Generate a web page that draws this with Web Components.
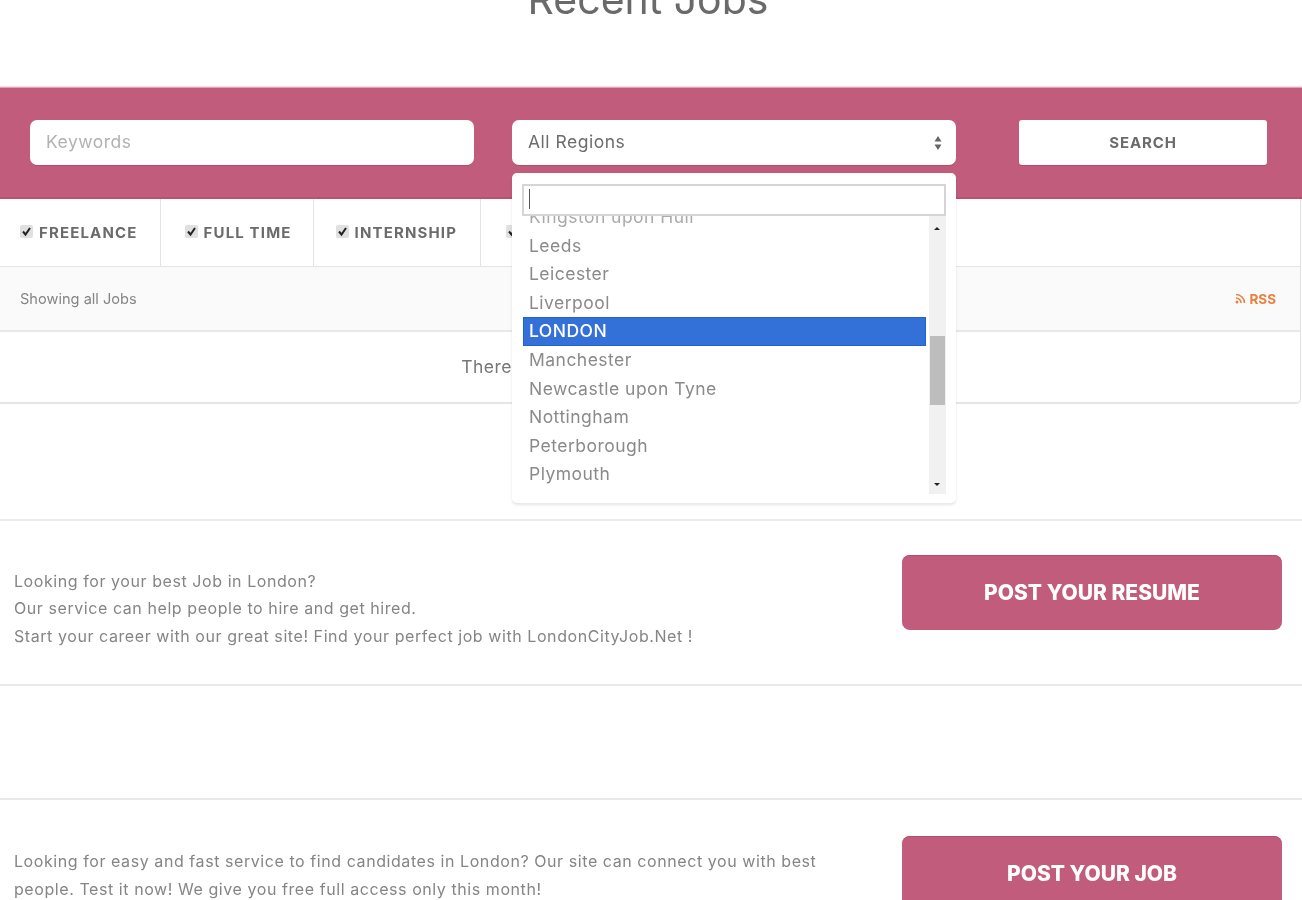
<!DOCTYPE html>
<html lang="en">
<head>
<meta charset="utf-8">
<title>Recent Jobs</title>
<style>
    html, body { margin: 0; height: 900px; overflow: hidden; background: #fff; }
    body { font-family: "Inter", "Liberation Sans", sans-serif; color: #777; filter: blur(.4px); }
</style>
</head>
<body>
<job-heading>Recent Jobs</job-heading>

<job-search>
    <job-filter slot="filters" pad="20 22">FREELANCE</job-filter>
    <job-filter slot="filters" pad="24 21">FULL TIME</job-filter>
    <job-filter slot="filters" pad="22 23">INTERNSHIP</job-filter>
    <job-filter slot="filters" pad="25 24">PART TIME</job-filter>
</job-search>

<div style="height:115px"></div>
<promo-row style="--row-height:167px; --row-pad:34px; --copy-top:12.5px">
    Looking for your best Job in London?<br>
    Our service can help people to hire and get hired.<br>
    Start your career with our great site! Find your perfect job with LondonCityJob.Net !
    <span slot="action">POST YOUR RESUME</span>
</promo-row>
<div style="height:112px"></div>
<promo-row style="--row-height:164px; --row-pad:36px; --copy-top:12px">
    Looking for easy and fast service to find candidates in London? Our site can connect you with best<br>
    people. Test it now! We give you free full access only this month!
    <span slot="action">POST YOUR JOB</span>
</promo-row>

<script>
const FONT = '"Inter", "Liberation Sans", sans-serif';

class JobHeading extends HTMLElement {
    constructor() {
        super();
        this.attachShadow({ mode: 'open' });
        this.shadowRoot.innerHTML = `
            <style>
                :host { display: block; height: 85px; overflow: hidden; }
                h2 {
                    margin: -31px 0 0;
                    text-align: center;
                    font: 400 41px/60px ${FONT};
                    color: #6a6a6a;
                    transform: translateX(-3px);
                }
            </style>
            <h2><slot></slot></h2>
        `;
    }
}

class JobFilter extends HTMLElement {
    constructor() {
        super();
        this.attachShadow({ mode: 'open' });
        const [left, right] = (this.getAttribute('pad') || '20 20').split(' ');
        this.shadowRoot.innerHTML = `
            <style>
                :host {
                    display: flex;
                    align-items: center;
                    gap: 6px;
                    height: 67px;
                    padding: 0 ${right}px 0 ${left}px;
                    border-right: 1px solid #e4e4e4;
                    font: 700 15px ${FONT};
                    letter-spacing: 1.15px;
                    color: #6b6b6b;
                }
                .box {
                    width: 13px;
                    height: 13px;
                    border-radius: 2px;
                    background: #e0e0e0;
                    margin-top: -3px;
                }
                svg { display: block; }
            </style>
            <span class="box">
                <svg width="13" height="13" viewBox="0 0 13 13"><path d="M3 6.5 5.5 9.5 10 3" fill="none" stroke="#222" stroke-width="2"/></svg>
            </span>
            <span><slot></slot></span>
        `;
    }
}

class RegionDropdown extends HTMLElement {
    constructor() {
        super();
        this.attachShadow({ mode: 'open' });
        const regions = ['Kingston upon Hull', 'Leeds', 'Leicester', 'Liverpool', 'LONDON', 'Manchester',
            'Newcastle upon Tyne', 'Nottingham', 'Peterborough', 'Plymouth'];
        this.shadowRoot.innerHTML = `
            <style>
                :host {
                    position: absolute;
                    left: 512px;
                    top: 88px;
                    z-index: 5;
                    width: 444px;
                    height: 330px;
                    box-sizing: border-box;
                    padding: 11px 10px 0;
                    background: #fff;
                    border-radius: 5px;
                    box-shadow: 0 2px 3px rgba(0,0,0,.1);
                    font: 400 17.5px ${FONT};
                    letter-spacing: .47px;
                }
                .search {
                    height: 32px;
                    box-sizing: border-box;
                    border: 2px solid #d5d5d5;
                    padding: 3px 5px;
                }
                .caret { display: block; width: 1px; height: 20px; background: #555; }
                .results { display: flex; height: 278px; }
                ul {
                    flex: 1;
                    margin: 0;
                    padding: 0;
                    list-style: none;
                    overflow: hidden;
                    min-width: 0;
                }
                li {
                    height: 28.6px;
                    line-height: 28.6px;
                    padding-left: 6px;
                    margin: 0 3px 0 1px;
                    color: #8a8a8a;
                }
                li:first-child { margin-top: -13px; color: #aaa; }
                li.on { background: #3370d8; color: #fff; font-weight: 500; outline: 1px solid #1f62d6; outline-offset: -1px; }
                .bar {
                    position: relative;
                    width: 17px;
                    background: #f1f1f1;
                }
                .thumb {
                    position: absolute;
                    left: 1px;
                    right: 1px;
                    top: 120px;
                    height: 69px;
                    background: #bdbdbd;
                }
                .arrow {
                    position: absolute;
                    left: 5px;
                    width: 0;
                    height: 0;
                    border: 3.5px solid transparent;
                }
                .up { top: 8px; border-bottom-color: #222; }
                .down { bottom: 5px; border-top-color: #222; }
            </style>
            <div class="search"><span class="caret"></span></div>
            <div class="results">
                <ul>${regions.map(r => `<li class="${r === 'LONDON' ? 'on' : ''}">${r}</li>`).join('')}</ul>
                <div class="bar">
                    <span class="arrow up"></span>
                    <span class="thumb"></span>
                    <span class="arrow down"></span>
                </div>
            </div>
        `;
    }
}

class JobSearch extends HTMLElement {
    constructor() {
        super();
        this.attachShadow({ mode: 'open' });
        this.shadowRoot.innerHTML = `
            <style>
                :host {
                    display: block;
                    position: relative;
                    height: 319px;
                    box-sizing: border-box;
                    padding-top: 2px;
                    margin-right: 1px;
                    border-right: 1px solid #e2e2e2;
                    border-bottom: 2px solid #e6e6e6;
                    border-radius: 0 0 5px 0;
                }
                .band {
                    display: flex;
                    align-items: flex-start;
                    height: 112px;
                    box-sizing: border-box;
                    margin-right: -2px;
                    padding: 32px 35px 0 30px;
                    background: #c25c7c;
                    border-top: 1px solid #dba6b8;
                    border-bottom: 2px solid #ba5073;
                    box-shadow: 0 -1px 1px #f3e0e6;
                }
                .field {
                    width: 444px;
                    height: 45px;
                    box-sizing: border-box;
                    display: flex;
                    align-items: center;
                    justify-content: space-between;
                    padding: 0 16px 2px;
                    background: #fff;
                    border-radius: 7px;
                    box-shadow: 0 1px 0 #b44a6c;
                    font: 400 17.5px ${FONT};
                    letter-spacing: .5px;
                    color: #b2b2b2;
                }
                .region { margin-left: 38px; color: #6d6d6d; padding-right: 14px; }
                .updown { display: block; margin-top: 2px; }
                .go {
                    margin-left: 63px;
                    width: 248px;
                    height: 45px;
                    display: flex;
                    align-items: center;
                    justify-content: center;
                    background: #fff;
                    border-radius: 3px;
                    box-shadow: 0 1px 0 #b44a6c;
                    font: 700 15px ${FONT};
                    letter-spacing: .85px;
                    color: #6b6b6b;
                }
                .filters { display: flex; height: 67px; border-bottom: 1px solid #e4e4e4; }
                .status {
                    display: flex;
                    align-items: center;
                    justify-content: space-between;
                    height: 63px;
                    padding: 0 24px 0 20px;
                    background: #fafafa;
                    border-bottom: 2px solid #e8e8e8;
                    font: 400 14.6px ${FONT};
                    color: #858585;
                }
                .rss {
                    display: flex;
                    align-items: center;
                    gap: 3px;
                    color: #e8813f;
                    font: 700 13.5px ${FONT};
                }
                .empty {
                    display: block;
                    padding-top: 24px;
                    text-align: center;
                    font: 400 17.5px ${FONT};
                    letter-spacing: .47px;
                    color: #777;
                }
            </style>
            <div class="band">
                <div class="field">Keywords</div>
                <div class="field region">All Regions
                    <svg class="updown" width="8" height="18" viewBox="0 0 8 18"><path d="M4 2 7.5 7.5H.5ZM4 16 .5 10.5H7.5Z" fill="#666"/></svg>
                </div>
                <div class="go">SEARCH</div>
            </div>
            <region-dropdown></region-dropdown>
            <div class="filters"><slot name="filters"></slot></div>
            <div class="status">
                <span>Showing all Jobs</span>
                <span class="rss">
                    <svg width="11" height="11" viewBox="0 0 11 11"><circle cx="2" cy="9" r="1.5" fill="#e8813f"/><path d="M1 5a5 5 0 0 1 5 5M1 1.5A8.5 8.5 0 0 1 9.5 10" fill="none" stroke="#e8813f" stroke-width="1.6"/></svg>
                    RSS
                </span>
            </div>
            <div class="empty">There are no listings matching your search.</div>
        `;
    }
}

class PromoRow extends HTMLElement {
    constructor() {
        super();
        this.attachShadow({ mode: 'open' });
        this.shadowRoot.innerHTML = `
            <style>
                :host {
                    display: flex;
                    justify-content: space-between;
                    align-items: flex-start;
                    height: var(--row-height);
                    box-sizing: border-box;
                    padding: var(--row-pad) 20px 0 14px;
                    border-top: 2px solid #e9e9e9;
                    border-bottom: 2px solid #e9e9e9;
                }
                .copy {
                    margin-top: var(--copy-top);
                    font: 400 16px/27.6px ${FONT};
                    letter-spacing: .57px;
                    color: #858585;
                }
                .action {
                    flex: none;
                    width: 380px;
                    height: 75px;
                    display: flex;
                    align-items: center;
                    justify-content: center;
                    background: #c25c7c;
                    border-radius: 8px;
                    box-shadow: inset 0 1px 0 #b84c70;
                    font: 800 21px ${FONT};
                    color: #fff;
                }
            </style>
            <div class="copy"><slot></slot></div>
            <div class="action"><slot name="action"></slot></div>
        `;
    }
}

customElements.define('job-heading', JobHeading);
customElements.define('job-filter', JobFilter);
customElements.define('region-dropdown', RegionDropdown);
customElements.define('job-search', JobSearch);
customElements.define('promo-row', PromoRow);
</script>
</body>
</html>
